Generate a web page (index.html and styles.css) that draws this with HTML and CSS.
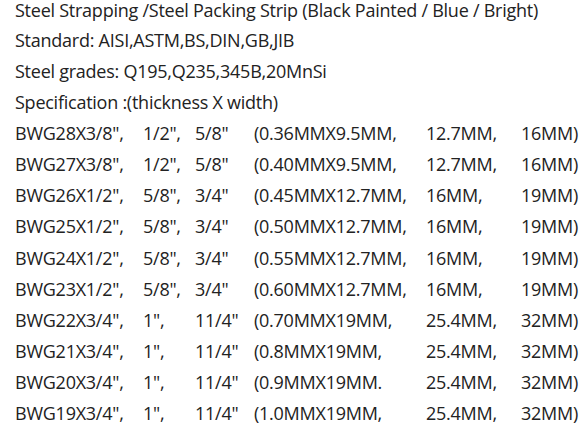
FILE: index.html
```html
<!DOCTYPE html>
<html>
<head>
<meta charset="utf-8">
<link rel="stylesheet" href="styles.css">
</head>
<body>
<div class="sheet">
  <p class="line first">Steel Strapping /Steel Packing Strip (Black Painted / Blue / Bright)</p>
  <p class="line">Standard: AISI,ASTM,BS,DIN,GB,JIB</p>
  <p class="line">Steel grades: Q195,Q235,345B,20MnSi</p>
  <p class="line">Specification :(thickness X width)</p>
  <div class="row"><span>BWG28X3/8",</span><span>1/2",</span><span>5/8"</span><span>(0.36MMX9.5MM,</span><span>12.7MM,</span><span>16MM)</span></div>
  <div class="row"><span>BWG27X3/8",</span><span>1/2",</span><span>5/8"</span><span>(0.40MMX9.5MM,</span><span>12.7MM,</span><span>16MM)</span></div>
  <div class="row"><span>BWG26X1/2",</span><span>5/8",</span><span>3/4"</span><span>(0.45MMX12.7MM,</span><span>16MM,</span><span>19MM)</span></div>
  <div class="row"><span>BWG25X1/2",</span><span>5/8",</span><span>3/4"</span><span>(0.50MMX12.7MM,</span><span>16MM,</span><span>19MM)</span></div>
  <div class="row"><span>BWG24X1/2",</span><span>5/8",</span><span>3/4"</span><span>(0.55MMX12.7MM,</span><span>16MM,</span><span>19MM)</span></div>
  <div class="row"><span>BWG23X1/2",</span><span>5/8",</span><span>3/4"</span><span>(0.60MMX12.7MM,</span><span>16MM,</span><span>19MM)</span></div>
  <div class="row"><span>BWG22X3/4",</span><span>1",</span><span>11/4"</span><span>(0.70MMX19MM,</span><span>25.4MM,</span><span>32MM)</span></div>
  <div class="row"><span>BWG21X3/4",</span><span>1",</span><span>11/4"</span><span>(0.8MMX19MM,</span><span>25.4MM,</span><span>32MM)</span></div>
  <div class="row"><span>BWG20X3/4",</span><span>1",</span><span>11/4"</span><span>(0.9MMX19MM.</span><span>25.4MM,</span><span>32MM)</span></div>
  <div class="row"><span>BWG19X3/4",</span><span>1",</span><span>11/4"</span><span>(1.0MMX19MM,</span><span>25.4MM,</span><span>32MM)</span></div>
</div>
</body>
</html>
```
FILE: styles.css
```css
html, body {
  margin: 0;
  padding: 0;
  background: #ffffff;
}
.sheet {
  padding-left: 15px;
  font-family: "Open Sans", "Noto Sans", sans-serif;
  font-size: 18px;
  line-height: 31.15px;
  letter-spacing: -0.25px;
  color: #222222;
  white-space: nowrap;
}
.line {
  margin: 0;
}
.first {
  line-height: 21px;
  margin-bottom: 3.5px;
}
.row {
  display: grid;
  grid-template-columns: 128px 52px 59px 172px 95px auto;
}
```
